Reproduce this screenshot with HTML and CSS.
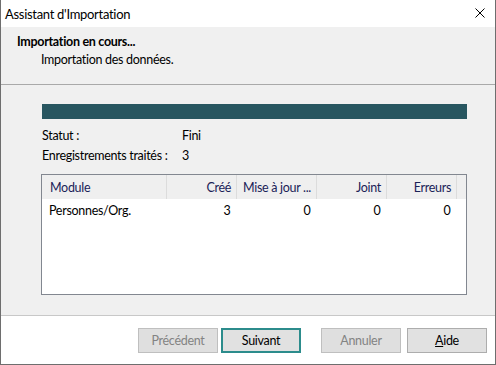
FILE: index.html
```html
<!DOCTYPE html>
<html>
<head>
    <title>Assistant d'Importation</title>
    <link rel="stylesheet" href="styles.css">
</head>
<body>

    <div class="window">
        <div class="titlebar">
            <span class="title">Assistant d'Importation</span>
            <svg class="close" width="10" height="10" viewBox="0 0 10 10">
                <path d="M0.5 0.5 L9.5 9.5 M9.5 0.5 L0.5 9.5" stroke="#000" stroke-width="1" fill="none"/>
            </svg>
        </div>

        <div class="header">
            <div class="header-title">Importation en cours...</div>
            <div class="header-sub">Importation des données.</div>
        </div>

        <div class="content">
            <div class="progress"></div>

            <div class="info-row">
                <span class="info-label">Statut :</span>
                <span>Fini</span>
            </div>
            <div class="info-row">
                <span class="info-label">Enregistrements traités :</span>
                <span>3</span>
            </div>

            <div class="list">
                <table>
                    <thead>
                        <tr>
                            <th class="col-module">Module</th>
                            <th class="num col-cree">Créé</th>
                            <th class="num col-maj">Mise à jour ...</th>
                            <th class="num col-joint">Joint</th>
                            <th class="num col-err">Erreurs</th>
                            <th class="col-rest"></th>
                        </tr>
                    </thead>
                    <tbody>
                        <tr>
                            <td class="first">Personnes/Org.</td>
                            <td class="num">3</td>
                            <td class="num">0</td>
                            <td class="num">0</td>
                            <td class="num">0</td>
                            <td></td>
                        </tr>
                    </tbody>
                </table>
            </div>
        </div>

        <div class="footer">
            <button class="btn" disabled>Précédent</button>
            <button class="btn btn-default">Suivant</button>
            <button class="btn btn-gap" disabled>Annuler</button>
            <button class="btn"><u>A</u>ide</button>
        </div>
    </div>

</body>
</html>
```

FILE: styles.css
```css
body {
    margin: 0;
    font-family: Lato, "Noto Sans", sans-serif;
    font-size: 12.5px;
    letter-spacing: -0.3px;
    color: #000;
}

.window {
    width: 496px;
    height: 365px;
    box-sizing: border-box;
    border: 1px solid #6e6e6e;
    border-top: none;
    display: flex;
    flex-direction: column;
    background: #f0f0f0;
}

.titlebar {
    height: 27px;
    background: #fff;
    display: flex;
    align-items: center;
    justify-content: space-between;
    padding: 0 10px 0 4px;
    font-size: 13px;
}
.close {
    margin-top: -1px;
}

.header {
    height: 58px;
    box-sizing: border-box;
    padding: 6px 0 0 16px;
    border-bottom: 1px solid #a9a9a9;
}
.header-title {
    font-weight: bold;
    line-height: 18px;
}
.header-sub {
    padding-left: 24px;
    line-height: 18px;
}

.content {
    flex: 1;
    padding: 19px 28px 0 40px;
    border-bottom: 1px solid #c8c8c8;
}

.progress {
    height: 15px;
    margin-left: 1px;
    background: #285660;
    margin-bottom: 7px;
}

.info-row {
    display: flex;
    line-height: 20px;
    padding-left: 1px;
}
.info-label {
    width: 140px;
}

.list {
    margin-top: 8px;
    height: 121px;
    box-sizing: border-box;
    border: 1px solid #828790;
    background: #fff;
}
table {
    border-collapse: collapse;
    width: 100%;
    table-layout: fixed;
}
th {
    height: 24px;
    padding: 0 5px;
    font-weight: normal;
    color: #1a2258;
    text-align: left;
    background: #efefef;
    border-right: 1px solid #dcdcdc;
    white-space: nowrap;
    overflow: hidden;
}
th.col-module {
    padding-left: 8px;
}
th.col-rest {
    border-right: none;
}
td {
    height: 22px;
    padding: 0 6px;
    white-space: nowrap;
}
td.first {
    padding-left: 7px;
}
.num {
    text-align: right;
}
.col-module { width: 111px; }
.col-cree { width: 59px; }
.col-maj { width: 69px; }
.col-joint { width: 59px; }
.col-err { width: 59px; }

.footer {
    height: 48px;
    box-sizing: border-box;
    background: #fff;
    display: flex;
    align-items: flex-start;
    padding: 12px 0 0 137px;
    gap: 3px;
}
.btn {
    width: 80px;
    height: 25px;
    font-family: inherit;
    font-size: 12.5px;
    letter-spacing: -0.3px;
    background: #e1e1e1;
    border: 1px solid #adadad;
    color: #000;
    padding: 0;
}
.btn:disabled {
    color: #838383;
    border-color: #bfbfbf;
    background: #dfdfdf;
}
.btn-default {
    border: 2px solid #2c8c8c;
}
.btn-gap {
    margin-left: 17px;
    margin-right: 3px;
}
```
